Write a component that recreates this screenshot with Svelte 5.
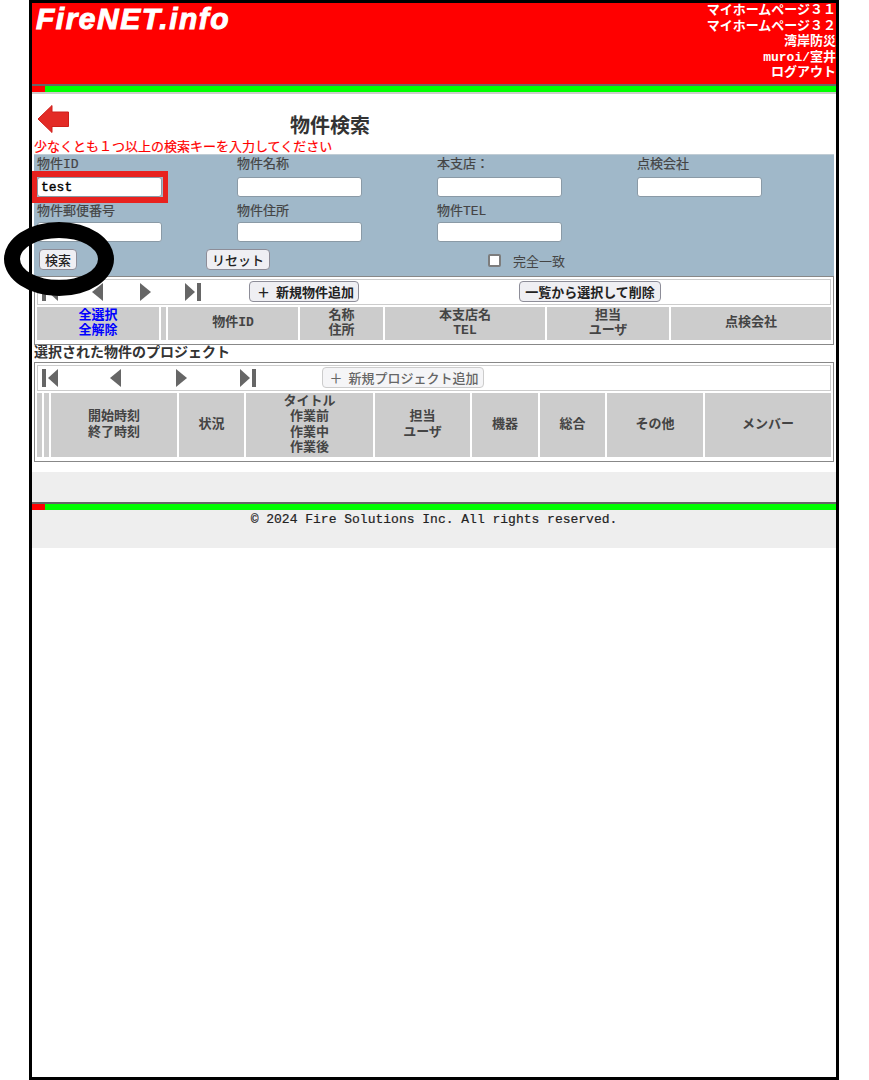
<script>
  const listCols = [
    { lines: ['全選択', '全解除'], link: true },
    { lines: [''] },
    { lines: ['物件ID'] },
    { lines: ['名称', '住所'] },
    { lines: ['本支店名', 'TEL'] },
    { lines: ['担当', 'ユーザ'] },
    { lines: ['点検会社'] }
  ];
  const projCols = [
    { lines: [''] },
    { lines: [''] },
    { lines: ['開始時刻', '終了時刻'] },
    { lines: ['状況'] },
    { lines: ['タイトル', '作業前', '作業中', '作業後'] },
    { lines: ['担当', 'ユーザ'] },
    { lines: ['機器'] },
    { lines: ['総合'] },
    { lines: ['その他'] },
    { lines: ['メンバー'] }
  ];
  const nav = ['マイホームページ３１', 'マイホームページ３２', '湾岸防災', 'muroi/室井', 'ログアウト'];
</script>

{#snippet first()}
  <svg class="ico" width="16" height="18" viewBox="0 0 16 18"><rect x="0" y="0" width="4" height="18" fill="#666"/><path d="M16 0V18L6 9Z" fill="#666"/></svg>
{/snippet}
{#snippet prev()}
  <svg class="ico" width="11" height="18" viewBox="0 0 11 18"><path d="M11 0V18L0 9Z" fill="#666"/></svg>
{/snippet}
{#snippet next()}
  <svg class="ico" width="11" height="18" viewBox="0 0 11 18"><path d="M0 0V18L11 9Z" fill="#666"/></svg>
{/snippet}
{#snippet last()}
  <svg class="ico" width="16" height="18" viewBox="0 0 16 18"><path d="M0 0V18L10 9Z" fill="#666"/><rect x="12" y="0" width="4" height="18" fill="#666"/></svg>
{/snippet}

<div class="frame">
  <header class="top">
    <div class="logo">FireNET.info</div>
    <nav class="nav">
      {#each nav as item}<div>{item}</div>{/each}
    </nav>
  </header>
  <div class="bar"><span class="bar-red"></span></div>
  <div class="bar-under"></div>

  <main class="content">
    <div class="title-row">
      <svg class="back" width="33" height="30" viewBox="0 0 33 30">
        <path d="M1 15 15 1.5V8H31.5V22.5H15V28.5Z" fill="#e32b26" stroke="#cf1f1a" stroke-width="1"/>
      </svg>
      <h1>物件検索</h1>
    </div>
    <p class="warn">少なくとも１つ以上の検索キーを入力してください</p>

    <form class="form">
      <label class="field"><span>物件ID</span><input class="input" value="test" /></label>
      <label class="field"><span>物件名称</span><input class="input" /></label>
      <label class="field"><span>本支店：</span><input class="input" /></label>
      <label class="field"><span>点検会社</span><input class="input" /></label>
      <label class="field"><span>物件郵便番号</span><input class="input" /></label>
      <label class="field"><span>物件住所</span><input class="input" /></label>
      <label class="field"><span>物件TEL</span><input class="input" /></label>
      <div></div>
      <div class="actions">
        <button type="button" class="btn search">検索</button>
        <button type="button" class="btn reset">リセット</button>
        <span class="check"><span class="box"></span><span class="check-label">完全一致</span></span>
      </div>
    </form>

    <section class="panel list">
      <div class="toolbar">
        <span class="i1">{@render first()}</span>
        <span class="i2">{@render prev()}</span>
        <span class="i3">{@render next()}</span>
        <span class="i4">{@render last()}</span>
        <button type="button" class="tbtn add">＋&nbsp;&nbsp;新規物件追加</button>
        <button type="button" class="tbtn del">一覧から選択して削除</button>
      </div>
      <div class="head head-list">
        {#each listCols as col}
          <div class="cell" class:link={col.link}>
            {#each col.lines as l}<div>{l}</div>{/each}
          </div>
        {/each}
      </div>
    </section>

    <h2 class="sub">選択された物件のプロジェクト</h2>

    <section class="panel proj">
      <div class="toolbar">
        <span class="p1">{@render first()}</span>
        <span class="p2">{@render prev()}</span>
        <span class="p3">{@render next()}</span>
        <span class="p4">{@render last()}</span>
        <button type="button" class="tbtn disabled">＋&nbsp;&nbsp;新規プロジェクト追加</button>
      </div>
      <div class="head head-proj">
        {#each projCols as col}
          <div class="cell">
            {#each col.lines as l}<div>{l}</div>{/each}
          </div>
        {/each}
      </div>
    </section>
  </main>

  <footer class="foot">
    <div class="bar foot-bar"><span class="bar-red"></span></div>
    <div class="copy">© 2024 Fire Solutions Inc. All rights reserved.</div>
  </footer>

  <div class="mark-rect"></div>
  <div class="mark-ellipse"></div>
</div>

<style>
  :global(body) {
    margin: 0;
    background: #fff;
  }
  .frame {
    position: relative;
    box-sizing: border-box;
    width: 810px;
    height: 1080px;
    margin-left: 29px;
    border: 3px solid #000;
    background: #fff;
    color: #333;
    font-family: "Liberation Mono", "Noto Sans CJK JP", monospace;
    font-size: 13px;
  }
  .top {
    display: flex;
    justify-content: space-between;
    height: 81px;
    background: #f00;
    color: #fff;
  }
  .logo {
    font-family: "Liberation Sans", sans-serif;
    font-style: italic;
    font-weight: 700;
    font-size: 30px;
    letter-spacing: 1.5px;
    -webkit-text-stroke: 1px #fff;
    line-height: 32px;
    padding-left: 4px;
  }
  .nav {
    font-weight: 700;
    font-size: 13px;
    line-height: 15.5px;
    text-align: right;
  }
  .bar {
    height: 8px;
    box-sizing: border-box;
    background: #0f0;
    border-top: 2px solid #666;
    display: flex;
  }
  .bar-red {
    width: 13px;
    background: #f00;
  }
  .bar-under {
    height: 2px;
    background: #ccc;
  }
  .content {
    padding: 0 2px;
  }
  .title-row {
    display: flex;
    align-items: flex-start;
    height: 43px;
  }
  .back {
    margin: 10px 0 0 3px;
  }
  h1 {
    margin: 19px 0 0 220px;
    font-family: "Noto Sans CJK JP", sans-serif;
    font-size: 20px;
    line-height: 24px;
    font-weight: 700;
    color: #333;
  }
  .warn {
    margin: 0;
    height: 17px;
    color: #f00;
    font-family: "Noto Sans CJK JP", sans-serif;
    font-size: 13px;
    line-height: 17px;
    white-space: nowrap;
    -webkit-text-stroke: 0.2px #f00;
  }
  .form {
    display: grid;
    grid-template-columns: repeat(4, 200px);
    padding: 0 0 5px 3px;
    height: 122px;
    box-sizing: border-box;
    background: #a0b8c9;
    border-top: 1px solid #c0ccd4;
    align-content: start;
  }
  .field {
    display: flex;
    flex-direction: column;
    align-items: flex-start;
  }
  .field span {
    box-sizing: border-box;
    height: 22px;
    line-height: 20px;
    color: #444;
    -webkit-text-stroke: 0.2px #444;
  }
  .field:nth-child(n+5) span {
    padding-top: 2px;
  }
  .input {
    box-sizing: border-box;
    width: 125px;
    height: 20px;
    margin: 0 0 3px;
    padding: 0 3px;
    border: 1px solid #8a9aa6;
    border-radius: 3px;
    background: #fff;
    font-family: "Liberation Mono", monospace;
    font-size: 13px;
    font-weight: 400;
    -webkit-text-stroke: 0.4px #000;
    color: #000;
    outline: none;
  }
  .actions {
    grid-column: 1 / -1;
    display: flex;
    align-items: center;
    height: 21px;
    margin-top: 4px;
    position: relative;
  }
  .btn, .tbtn {
    font-family: "Noto Sans CJK JP", sans-serif;
    font-size: 13px;
    line-height: 1;
    box-sizing: border-box;
    background: #efeff3;
    color: #222;
    border: 1px solid #8d8d98;
    border-radius: 4px;
    padding: 0;
    white-space: nowrap;
    font-weight: 500;
  }
  .btn {
    height: 21px;
  }
  .search {
    width: 38px;
    margin-left: 2px;
  }
  .reset {
    width: 64px;
    margin-left: 129px;
  }
  .check {
    display: flex;
    align-items: center;
    margin-left: 218px;
    margin-top: 1px;
  }
  .box {
    box-sizing: border-box;
    width: 13px;
    height: 13px;
    background: #fff;
    border: 2px solid #7d7d7d;
    border-radius: 2px;
  }
  .check-label {
    margin-left: 12px;
    color: #444;
    font-family: "Noto Sans CJK JP", sans-serif;
  }
  .panel {
    box-sizing: border-box;
    border: 1px solid #888;
    padding: 2px 2px 0;
  }
  .list {
    height: 69px;
  }
  .proj {
    height: 100px;
  }
  .toolbar {
    position: relative;
    display: flex;
    align-items: center;
    box-sizing: border-box;
    height: 26px;
    border: 1px solid #ccc;
    background: #fff;
  }
  .ico {
    display: block;
  }
  .i1 { margin-left: 4px; }
  .i2 { margin-left: 34px; }
  .i3 { margin-left: 37px; }
  .i4 { margin-left: 34px; }
  .p1 { margin-left: 4px; }
  .p2 { margin-left: 52px; }
  .p3 { margin-left: 55px; }
  .p4 { margin-left: 53px; }
  .tbtn {
    height: 21px;
    font-weight: 700;
    align-self: flex-start;
    margin-top: 1px;
    padding-bottom: 1px;
  }
  .add {
    width: 110px;
    margin-left: 48px;
    padding-left: 3px;
  }
  .del {
    width: 142px;
    margin-left: 160px;
  }
  .disabled {
    width: 162px;
    margin-left: 66px;
    padding-left: 2px;
    color: #666;
    background: #f5f5f7;
    border-color: #ccc;
    font-weight: 500;
  }
  .head {
    display: grid;
    column-gap: 2px;
    margin-top: 2px;
  }
  .head-list {
    height: 33px;
    grid-template-columns: 122px 5px 130px 83px 160px 122px 160px;
  }
  .head-proj {
    height: 64px;
    grid-template-columns: 5px 5px 126px 65px 127px 95px 66px 65px 96px 126px;
  }
  .cell {
    box-sizing: border-box;
    padding-bottom: 1px;
    background: #ccc;
    display: flex;
    flex-direction: column;
    align-items: center;
    justify-content: center;
    text-align: center;
    font-weight: 700;
    font-size: 13px;
    line-height: 15.5px;
    color: #444;
  }
  .link {
    color: #00f;
  }
  .sub {
    margin: 0;
    height: 17px;
    font-family: "Noto Sans CJK JP", sans-serif;
    font-size: 14px;
    line-height: 12px;
    font-weight: 700;
    color: #333;
  }
  .foot {
    margin-top: 10px;
    height: 76px;
    padding-top: 30px;
    box-sizing: border-box;
    background: #eee;
  }
  .foot-bar {
    height: 8px;
  }
  .copy {
    text-align: center;
    line-height: 18px;
    margin-top: 1px;
    color: #222;
    -webkit-text-stroke: 0.2px #222;
  }
  .mark-rect {
    position: absolute;
    left: 0;
    top: 168px;
    width: 136px;
    height: 32px;
    box-sizing: border-box;
    border-style: solid;
    border-color: #e8221f;
    border-width: 6px 5px;
  }
  .mark-ellipse {
    position: absolute;
    left: -28px;
    top: 219px;
    width: 110px;
    height: 74px;
    box-sizing: border-box;
    border: 16px solid #000;
    border-radius: 50%;
  }
</style>
